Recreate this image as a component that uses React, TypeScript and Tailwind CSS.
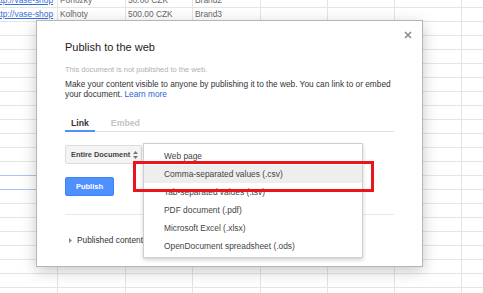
import React from "react";

const sheet: string[][] = [
  ["http://vase-shop", "Ponožky", "50.00 CZK", "Brand2"],
  ["http://vase-shop", "Kolhoty", "500.00 CZK", "Brand3"],
];

const menuItems = [
  "Web page",
  "Comma-separated values (.csv)",
  "Tab-separated values (.tsv)",
  "PDF document (.pdf)",
  "Microsoft Excel (.xlsx)",
  "OpenDocument spreadsheet (.ods)",
];

function Sheet() {
  const rows = Array.from({ length: 22 }, (_, r) => r);
  const cols = Array.from({ length: 8 }, (_, c) => c);
  return (
    <div className="ml-[-9px] mt-[-6px] grid grid-cols-[67px_68px_67px_68px_67px_67px_67px_67px]">
      {rows.map((r) =>
        cols.map((c) => {
          const txt = sheet[r]?.[c] ?? "";
          const blue = c === 0 && (r === 12 || r === 13);
          return (
            <div
              key={`${r}-${c}`}
              className={
                blue
                  ? "h-[14px] overflow-hidden whitespace-nowrap border-r border-b border-r-[#e2e2e2] border-b-[#a9c5f7] pl-[2px] text-[8.4px] leading-[13px] text-[#666]"
                  : c === 0
                  ? "h-[14px] overflow-hidden whitespace-nowrap border-r border-b border-[#e4e4e4] pl-[2.5px] text-[8.4px] leading-[13px] text-[#666]"
                  : "h-[14px] overflow-hidden whitespace-nowrap border-r border-b border-[#e4e4e4] pl-[2px] text-[8.4px] leading-[13px] text-[#666]"
              }
            >
              {c === 0 && txt ? (
                <span className="text-[#3a6fd8] underline">{txt}</span>
              ) : (
                txt
              )}
            </div>
          );
        })
      )}
    </div>
  );
}

export default function App() {
  return (
    <div className="relative h-[293px] w-[483px] overflow-hidden bg-white font-['Liberation_Sans',Arial,sans-serif]">
      <Sheet />

      {/* Dialog */}
      <div className="absolute left-[36px] top-[20px] h-[247px] w-[387px] border border-[#b5b5b5] bg-white shadow-[0_4px_14px_rgba(0,0,0,0.22)]">
        <button className="absolute right-[10px] top-[10px] flex h-[8px] w-[8px] items-center justify-center">
          <svg width="8" height="8" viewBox="0 0 8 8">
            <path d="M1 1L7 7M7 1L1 7" stroke="#8a8a8a" strokeWidth="1.6" />
          </svg>
        </button>

        <div className="flex flex-col px-[28px] pt-[20px]">
          <div className="text-[11px] leading-[13px] text-[#222]">Publish to the web</div>
          <div className="mt-[11px] text-[7.5px] leading-[10px] text-[#b0b0b0]">
            This document is not published to the web.
          </div>
          <div className="mt-[4px] text-[8.3px] leading-[10px] text-[#333]">
            Make your content visible to anyone by publishing it to the web. You can link to or embed your document.{" "}
            <span className="text-[#2a64d6]">Learn more</span>
          </div>

          {/* Tabs */}
          <div className="mt-[19px] flex border-b border-[#e0e0e0]">
            <div className="mb-[-1px] border-b-2 border-[#4d90fe] px-[6px] pb-[1px] text-[8.7px] font-bold leading-[11px] text-[#333]">
              Link
            </div>
            <div className="ml-[10px] px-[6px] text-[8.7px] font-bold leading-[11px] text-[#c4c4c4]">
              Embed
            </div>
          </div>

          {/* Select */}
          <div className="mt-[13px] flex h-[19px] w-[77px] items-center justify-between rounded-[2px] border border-[#dcdcdc] bg-[#f4f4f4] pl-[5px] pr-[3px]">
            <span className="text-[7.4px] font-bold text-[#444]">Entire Document</span>
            <svg width="5" height="8" viewBox="0 0 5 8">
              <path d="M2.5 0L5 3H0Z" fill="#777" />
              <path d="M2.5 8L5 5H0Z" fill="#777" />
            </svg>
          </div>

          {/* Publish button */}
          <div className="mt-[13px] flex h-[19px] w-[49px] items-center justify-center rounded-[2px] border border-[#3d83f5] bg-[#4d90fe] text-[7.5px] font-bold text-white">
            Publish
          </div>

          <div className="mt-[18px] border-t border-[#e8e8e8]" />

          <div className="mt-[20px] flex items-center gap-[5px] pl-[4px] text-[8.3px] leading-[11px] text-[#333]">
            <svg width="3" height="5" viewBox="0 0 3 5">
              <path d="M0 0L3 2.5L0 5Z" fill="#888" />
            </svg>
            <span>Published content &amp; settings</span>
          </div>
        </div>
      </div>

      {/* Dropdown menu */}
      <div className="absolute left-[143px] top-[143px] w-[220px] border border-[#cfcfcf] bg-white pb-[2px] pt-[3px] shadow-[0_2px_4px_rgba(0,0,0,0.18)]">
        {menuItems.map((item, i) => (
          <div
            key={item}
            className={
              i === 1
                ? "h-[18px] bg-[#eeeeee] pl-[20px] text-[8.4px] leading-[18px] text-[#444]"
                : "h-[18px] pl-[20px] text-[8.4px] leading-[18px] text-[#444]"
            }
          >
            {item}
          </div>
        ))}
      </div>

      {/* Red annotation box */}
      <div className="absolute left-[133px] top-[161px] h-[31px] w-[241px] border-[3px] border-[#e8151c]" />
    </div>
  );
}
